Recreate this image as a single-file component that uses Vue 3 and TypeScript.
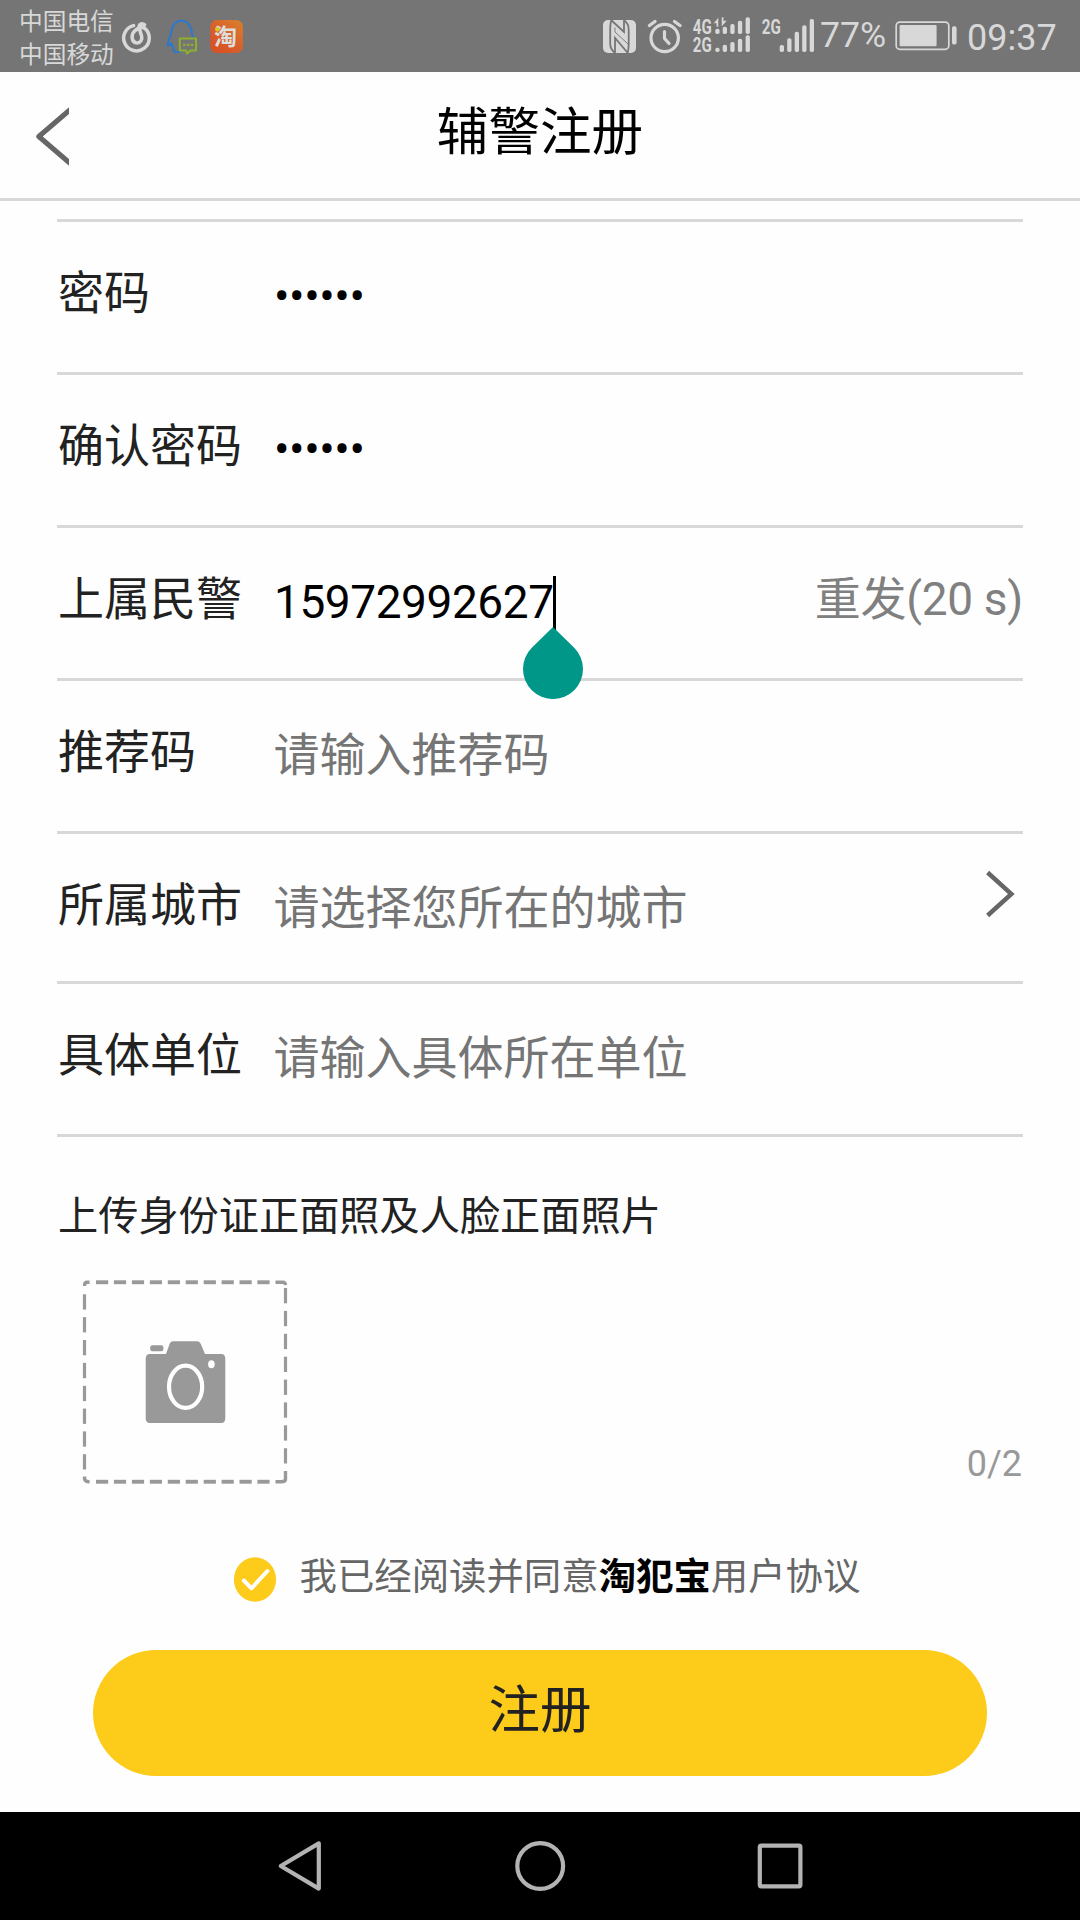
<script setup lang="ts">
interface Row {
  label: string
  value?: string
  placeholder?: string
  caret?: boolean
  action?: string
  arrow?: boolean
}

const rows: Row[] = [
  { label: '密码', value: '••••••' },
  { label: '确认密码', value: '••••••' },
  { label: '上属民警', value: '15972992627', caret: true, action: '重发(20 s)' },
  { label: '推荐码', placeholder: '请输入推荐码' },
  { label: '所属城市', placeholder: '请选择您所在的城市', arrow: true },
  { label: '具体单位', placeholder: '请输入具体所在单位' },
]

const signalTop = [28.7, 26.7, 24, 20.7, 17.3]
const signalLow = [47.7, 44.7, 42, 38.7, 35.3]
const signalBig = [45, 38.3, 31.7, 25.3, 19]
const smallX = [715.3, 722.7, 730.3, 737.9, 745.6]
const bigX = [779.7, 787.2, 794.7, 802.2, 809.7]

const dashX = [96, 113.9, 131.9, 149.8, 167.8, 185.7, 203.7, 221.6, 239.5, 257.4]
const dashLeft = [1294.3, 1317.1, 1340, 1362.9, 1385.8, 1408.6, 1431.4, 1454.2]
const dashRight = [1288, 1310.9, 1333.8, 1356.7, 1379.6, 1402.4, 1425.3, 1448.2]
</script>

<template>
  <div class="phone">
    <header class="status">
      <div class="carriers">
        <span>中国电信</span>
        <span>中国移动</span>
      </div>
      <svg class="apps" width="134" height="72" viewBox="116 0 134 72" fill="none">
        <path
          d="M133.6 25.6A12.8 12.8 0 1 0 144.6 28.2C141.5 26.6 137.2 28.4 134.2 31.4C131 35 131.4 41.6 136 42.8C140.4 43.6 142.6 39.4 141.6 36L139.2 28.4C138.4 24.4 141.8 22.4 144.6 24.9"
          stroke="#d8d8d8" stroke-width="3.5" stroke-linecap="round" />
        <path
          d="M193.3 37.5L191.8 33.5C191.8 26 187.5 20.7 181.5 20.7S171.2 26 171.2 33.5C170 38 167.3 41 167.8 45.3C168.6 46.6 170 44.6 171.2 43C171.7 46 173 47.4 174 48.6C172 50.4 173.6 52 176.5 52C179 52 181 50.6 182.5 50.4"
          stroke="#2b78d0" stroke-width="1.9" stroke-linejoin="round" />
        <path d="M179.8 38.6H196V50.6H190.5L187 53.4L186.2 50.6H179.8Z" stroke="#8fb02f" stroke-width="2"
          stroke-linejoin="round" />
        <path d="M183.2 44.8h2.4M187 44.8h2.4M190.8 44.8h2.4" stroke="#8fb02f" stroke-width="2.2" />
        <defs>
          <linearGradient id="tao" x1="1" y1="0" x2="0.2" y2="1">
            <stop offset="0" stop-color="#d8822c" />
            <stop offset="0.55" stop-color="#d9602a" />
            <stop offset="1" stop-color="#d85125" />
          </linearGradient>
        </defs>
        <rect x="210.3" y="20" width="32.6" height="33" rx="6.5" fill="url(#tao)" />
        <text x="214" y="44.8" font-size="23" font-weight="700" textLength="24.5" fill="#dedede"
          class="tao">淘</text>
        <circle cx="217.4" cy="29.3" r="2.4" fill="#dcc32a" />
      </svg>
      <svg class="signals" width="222" height="72" viewBox="598 0 222 72" fill="#d8d8d8">
        <rect x="603" y="20" width="33" height="33" rx="5" />
        <g fill="none" stroke="#757575" stroke-width="1.8">
          <path d="M611.3 20Q610.2 24 610.2 29V43.5Q610.2 49.5 615.2 53" />
          <path d="M623.8 20Q628.7 23.5 628.7 29.5V44Q628.7 49 627.6 53" />
          <path d="M611.6 20.5L624 32V20.2" />
          <path d="M627.4 52.5L615 38V52.8" />
          <path d="M615 27.5V32L628 44" stroke-width="0.9" />
        </g>
        <g fill="none" stroke="#d8d8d8" stroke-linecap="round" stroke-linejoin="round">
          <circle cx="664.7" cy="38" r="13.7" stroke-width="3.2" />
          <path d="M664.5 31.5V38.5L669 43.3" stroke-width="3.2" />
          <path d="M649.5 25.5L655 21.5M680 25.5L674.5 21.5" stroke-width="3.4" />
        </g>
        <g class="net" font-size="21" font-weight="700">
          <text x="692.8" y="33.8" textLength="19" lengthAdjust="spacingAndGlyphs">4G</text>
          <text x="692.8" y="51.9" textLength="19" lengthAdjust="spacingAndGlyphs">2G</text>
          <text x="761.8" y="33.8" textLength="19" lengthAdjust="spacingAndGlyphs">2G</text>
        </g>
        <rect v-for="(x, i) in smallX" :key="'a' + i" :x="x" :y="signalTop[i]" width="4.3"
          :height="34 - signalTop[i]" rx="1.8" />
        <rect v-for="(x, i) in smallX" :key="'b' + i" :x="x" :y="signalLow[i]" width="4.3"
          :height="52 - signalLow[i]" rx="1.8" />
        <rect v-for="(x, i) in bigX" :key="'c' + i" :x="x" :y="signalBig[i]" width="4.3"
          :height="52 - signalBig[i]" rx="1.8" />
        <path d="M713.3 23.5L718.6 17V27H716.2V23.5ZM721.4 17H723.8V20.5H727.3L721.4 27Z" stroke="#757575"
          stroke-width="0.6" />
      </svg>
      <span class="percent">77%</span>
      <svg class="battery" width="64" height="72" viewBox="894 0 64 72">
        <rect x="896.2" y="22.1" width="52.6" height="27.2" rx="3.6" fill="none" stroke="#d8d8d8"
          stroke-width="1.7" />
        <rect x="899.6" y="25" width="37" height="21.2" rx="1" fill="#d8d8d8" />
        <rect x="952" y="26.3" width="4.6" height="18.2" rx="1.8" fill="#d8d8d8" />
      </svg>
      <span class="clock">09:37</span>
    </header>

    <div class="titlebar">
      <svg class="back" width="36" height="64" viewBox="33 104 36 64">
        <path d="M71 108.9L38.8 136.5L71 164.1" fill="none" stroke="#666" stroke-width="5"
          stroke-linejoin="round" />
      </svg>
      <h1>辅警注册</h1>
    </div>

    <main>
      <ul class="form">
        <li v-for="(row, i) in rows" :key="i" :class="{ short: row.arrow }">
          <span class="label">{{ row.label }}</span>
          <span class="field">
            <span v-if="row.value" class="value">{{ row.value }}</span>
            <span v-else class="hint">{{ row.placeholder }}</span>
            <span v-if="row.caret" class="caret">
              <svg class="handle" width="60" height="72" viewBox="0 0 60 72">
                <path d="M30 0L51.2 20.8A30 30 0 1 1 8.8 20.8Z" fill="#009688" />
              </svg>
            </span>
          </span>
          <span v-if="row.action" class="action">{{ row.action }}</span>
          <svg v-if="row.arrow" class="arrow" width="32" height="50" viewBox="984 869 32 50">
            <path d="M987.6 872.5L1011.4 894L987.6 915.5" fill="none" stroke="#666" stroke-width="4.4" />
          </svg>
        </li>
      </ul>

      <section class="upload">
        <h2>上传身份证正面照及人脸正面照片</h2>
        <div class="photos">
          <svg width="206" height="206" viewBox="82 1279 206 206">
            <g fill="#999">
              <template v-for="x in dashX" :key="x">
                <rect :x="x" y="1280.3" width="12.2" height="3.9" />
                <rect :x="x" y="1479.8" width="12.2" height="3.9" />
              </template>
              <rect v-for="y in dashLeft" :key="y" x="82.9" :y="y" width="3.2" height="15.3" />
              <rect v-for="y in dashRight" :key="y" x="283.9" :y="y" width="3.2" height="15.3" />
            </g>
            <g fill="none" stroke="#999" stroke-width="3.4">
              <path d="M84.6 1286V1285Q84.6 1282.2 87 1282.2H89.6" />
              <path d="M275.5 1282.2H283Q285 1282.2 285.6 1285" />
              <path d="M84.6 1476.5V1479Q85 1481.8 89.6 1481.8" />
              <path d="M285.5 1471V1479Q285.5 1481.8 281 1481.8H275.5" />
            </g>
            <path
              d="M149.7 1354H166L169.4 1344.5Q170.6 1341.3 173 1341.3H197Q199.6 1341.3 201 1344.5L205 1354H221.3Q225.3 1354 225.3 1359V1418Q225.3 1423 221.3 1423H149.7Q145.7 1423 145.7 1418V1359Q145.7 1354 149.7 1354Z"
              fill="#999" />
            <rect x="150.2" y="1345.2" width="13.2" height="6" rx="2.2" fill="#999" />
            <ellipse cx="185.6" cy="1386.8" rx="16.6" ry="21.1" fill="none" stroke="#fff" stroke-width="4.2" />
            <ellipse cx="211.4" cy="1364.3" rx="3.3" ry="4" fill="#fff" />
          </svg>
          <span class="count">0/2</span>
        </div>
      </section>

      <div class="agree">
        <svg width="44" height="47" viewBox="233 1556 44 47">
          <ellipse cx="255" cy="1579.5" rx="21.1" ry="22.3" fill="#fdcb19" />
          <path d="M243.8 1580.5L251.5 1588.3L267.4 1571" fill="none" stroke="#fff" stroke-width="4"
            stroke-linecap="round" stroke-linejoin="round" />
        </svg>
        <p>我已经阅读并同意<b>淘犯宝</b>用户协议</p>
      </div>

      <button class="submit" type="button">注册</button>
    </main>

    <nav>
      <svg width="1080" height="108" viewBox="0 1812 1080 108" fill="none" stroke="#b3b3b3" stroke-width="4.2"
        stroke-linejoin="round">
        <path d="M318.8 1843.4V1888.6L280.8 1866Z" />
        <circle cx="540.2" cy="1866" r="22.9" />
        <rect x="759.8" y="1845.7" width="40.6" height="40.6" rx="1.5" />
      </svg>
    </nav>
  </div>
</template>

<style>
body {
  margin: 0;
  background: #fff;
}
</style>

<style scoped>
.phone {
  width: 1080px;
  height: 1920px;
  display: flex;
  flex-direction: column;
  background: #fefefe;
  font-family: Roboto, "Noto Sans CJK SC", sans-serif;
  color: #222;
  overflow: hidden;
}
svg {
  display: block;
  flex: none;
}
.status {
  height: 72px;
  flex: none;
  display: flex;
  background: #757575;
  color: #d8d8d8;
}
.carriers {
  width: 97px;
  padding: 6px 0 0 19px;
  display: flex;
  flex-direction: column;
  font-size: 23.7px;
  line-height: 33px;
  white-space: nowrap;
}
.tao {
  font-family: "Noto Sans CJK SC", sans-serif;
}
.signals {
  margin-left: 348px;
}
.net {
  font-family: Roboto, sans-serif;
}
.percent {
  width: 74px;
  font-size: 35.7px;
  line-height: 71px;
}
.clock {
  margin-left: 9px;
  font-size: 36px;
  line-height: 76px;
}
.titlebar {
  height: 126px;
  flex: none;
  display: grid;
  grid-template-columns: 1fr auto 1fr;
  border-bottom: 3px solid #d8d8d8;
}
.back {
  margin: 32px 0 0 33px;
}
h1 {
  margin: 0;
  font-size: 51.6px;
  font-weight: 400;
  line-height: 122px;
  color: #000;
}
main {
  flex: 1;
  padding: 18px 57px 0;
}
.form {
  margin: 0;
  padding: 0;
  list-style: none;
  border-top: 3px solid #d8d8d8;
  font-size: 46px;
}
.form li {
  height: 150px;
  display: flex;
  border-bottom: 3px solid #d8d8d8;
}
.form li.short {
  height: 147px;
}
.label {
  width: 215.5px;
  padding-left: 1px;
  line-height: 142px;
}
.field {
  flex: 1;
  display: flex;
  line-height: 149px;
}
.value {
  padding-left: 0.5px;
  letter-spacing: -0.44px;
  color: #000;
}
.hint {
  color: #757575;
}
.caret {
  position: relative;
  width: 3px;
  height: 54px;
  margin: 48px 0 0 -0.5px;
  background: #000;
}
.handle {
  position: absolute;
  left: -30px;
  top: 51px;
}
.action {
  line-height: 142px;
  letter-spacing: -0.3px;
  color: #808080;
}
.arrow {
  margin: 35px 7px 0 0;
}
h2 {
  margin: 0;
  padding: 48px 0 0 1px;
  font-size: 40.2px;
  font-weight: 400;
  line-height: 64px;
}
.photos {
  margin-top: 30px;
  padding-left: 25px;
  height: 206px;
  display: flex;
  justify-content: space-between;
  align-items: flex-end;
}
.count {
  margin-right: 1px;
  font-size: 36px;
  line-height: 42px;
  color: #999;
}
.agree {
  margin-top: 71px;
  padding-left: 176px;
  height: 47px;
  display: flex;
}
.agree p {
  margin: -3px 0 0 22.5px;
  font-size: 37.4px;
  line-height: 48px;
  color: #666;
  white-space: nowrap;
}
.agree b {
  color: #000;
}
.submit {
  display: block;
  width: 894px;
  height: 126px;
  margin: 47px 0 0 36px;
  padding: 0 0 4px;
  border: 0;
  border-radius: 63px;
  background: #fdcb19;
  color: #222;
  font-family: inherit;
  font-size: 51.5px;
  line-height: 122px;
}
nav {
  height: 108px;
  flex: none;
  background: #000;
}
</style>
